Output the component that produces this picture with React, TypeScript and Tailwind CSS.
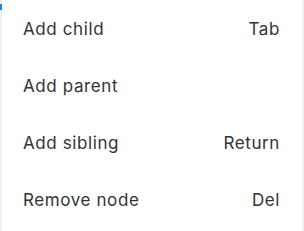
const items = [
  { label: "Add child", hint: "Tab" },
  { label: "Add parent", hint: "" },
  { label: "Add sibling", hint: "Return" },
  { label: "Remove node", hint: "Del" },
];

export default function App() {
  return (
    <div className="relative flex h-[231px] w-[304px] bg-[#eef0f6] px-[2px] font-['Inter',sans-serif]">
      <div className="absolute left-0 top-[4px] h-[6px] w-[2px] bg-[#1e88e5]" />
      <ul className="flex flex-1 flex-col bg-white">
        {items.map((item) => (
          <li
            key={item.label}
            className="flex h-[57px] items-center justify-between pl-[21px] pr-[22px] pt-[3px] text-[17px] tracking-[0.6px] text-[#333333]"
          >
            <span>{item.label}</span>
            <span>{item.hint}</span>
          </li>
        ))}
      </ul>
    </div>
  );
}
